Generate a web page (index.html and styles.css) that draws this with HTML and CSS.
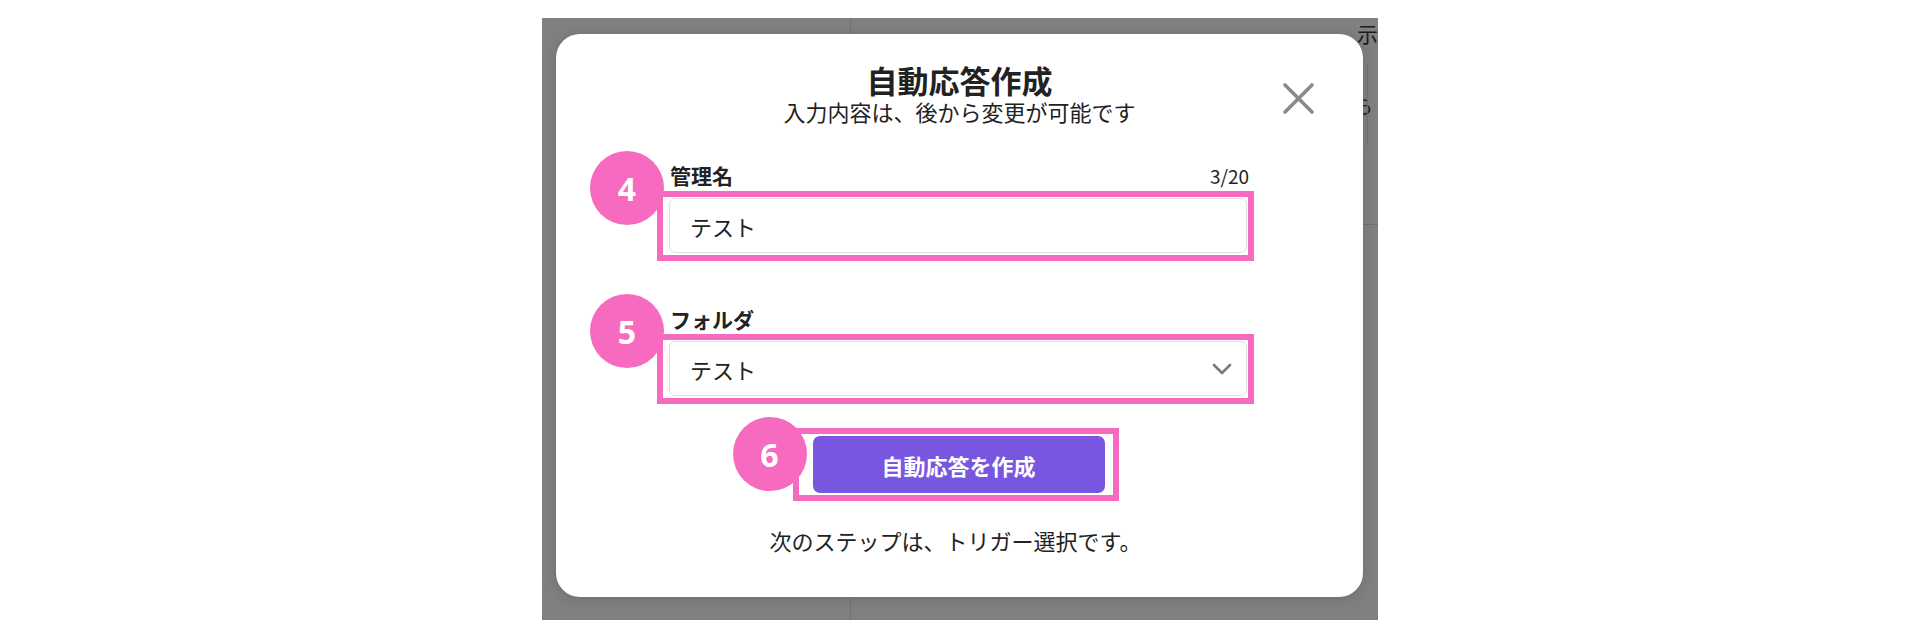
FILE: index.html
```html
<!DOCTYPE html>
<html lang="ja">
<head>
    <meta charset="UTF-8">
    <meta name="viewport" content="width=device-width, initial-scale=1.0">
    <title>自動応答作成</title>
    <link rel="stylesheet" href="styles.css">
</head>
<body>
    <div class="screen">
        <!-- dimmed page behind the dialog -->
        <div class="page">
            <div class="page-side"></div>
            <div class="page-main">
                <div class="page-head">示</div>
                <div class="page-row">
                    <span class="page-glyph">ら</span>
                    <div class="page-rail"></div>
                </div>
                <div class="page-block"></div>
            </div>
        </div>

        <div class="overlay">
            <div class="modal">
                <button class="close" aria-label="閉じる">
                    <svg width="33" height="33" viewBox="0 0 33 33">
                        <path d="M3 3 L30 30 M30 3 L3 30" stroke="#8a8a8a" stroke-width="3.6" stroke-linecap="round" fill="none"/>
                    </svg>
                </button>

                <div class="modal-head">
                    <h1>自動応答作成</h1>
                    <p>入力内容は、後から変更が可能です</p>
                </div>

                <div class="modal-body">
                    <div class="field">
                        <div class="field-label">
                            <span>管理名</span>
                            <span class="counter">3/20</span>
                        </div>
                        <div class="mark">
                            <span class="step step-field">4</span>
                            <input class="text-input" type="text" value="テスト">
                        </div>
                    </div>

                    <div class="field field-folder">
                        <div class="field-label">
                            <span>フォルダ</span>
                        </div>
                        <div class="mark">
                            <span class="step step-field">5</span>
                            <div class="select">
                                <span>テスト</span>
                                <svg width="20" height="12" viewBox="0 0 20 12">
                                    <path d="M2 2 L10 10 L18 2" stroke="#7a7a7a" stroke-width="2.6" stroke-linecap="round" stroke-linejoin="round" fill="none"/>
                                </svg>
                            </div>
                        </div>
                    </div>

                    <div class="submit-row">
                        <div class="mark mark-button">
                            <span class="step step-button">6</span>
                            <button class="submit">自動応答を作成</button>
                        </div>
                    </div>

                    <p class="next">次のステップは、トリガー選択です。</p>
                </div>
            </div>
        </div>
    </div>
</body>
</html>
```

FILE: styles.css
```css
body {
    margin: 0;
    background-color: #ffffff;
    font-family: "Noto Sans CJK JP", "Noto Sans", sans-serif;
    color: #222222;
}
.screen {
    position: relative;
    width: 836px;
    height: 602px;
    margin: 18px 0 0 542px;
    background-color: #808080;
    overflow: hidden;
}

/* page behind */
.page {
    display: grid;
    grid-template-columns: 309px 1fr;
    height: 100%;
}
.page-side {
    border-right: 1px solid #727272;
}
.page-main {
    display: flex;
    flex-direction: column;
}
.page-head {
    height: 47px;
    font-size: 21px;
    line-height: 30px;
    text-align: right;
    color: #1c1c1c;
    white-space: nowrap;
}
.page-row {
    display: flex;
    justify-content: flex-end;
    align-items: center;
    height: 80px;
}
.page-glyph {
    font-size: 19px;
    color: #1c1c1c;
    margin-right: -6px;
}
.page-rail {
    width: 10px;
    height: 80px;
    border-left: 1px solid #6f6f6f;
}
.page-block {
    height: 79px;
    border-bottom: 1px solid #707070;
}

/* dialog */
.overlay {
    position: absolute;
    top: 0;
    left: 0;
    right: 0;
    bottom: 0;
    display: flex;
    padding: 16px 15px 23px 14px;
}
.modal {
    position: relative;
    flex: 1;
    background-color: #ffffff;
    border-radius: 24px;
    padding: 28px 0 0;
    box-shadow: 0 2px 14px rgba(0, 0, 0, 0.15);
}
.close {
    position: absolute;
    top: 48px;
    right: 48px;
    padding: 0;
    border: none;
    background: none;
    line-height: 0;
    cursor: pointer;
}
.modal-head {
    text-align: center;
}
.modal-head h1 {
    margin: 0;
    font-size: 31px;
    line-height: 35px;
    font-weight: 700;
}
.modal-head p {
    margin: 0;
    font-size: 22px;
    line-height: 28px;
}
.modal-body {
    padding: 0 109px 0 101px;
}
.field {
    margin-top: 36px;
}
.field-folder {
    margin-top: 44px;
}
.field-label {
    display: flex;
    justify-content: space-between;
    align-items: baseline;
    padding: 0 5px 0 13px;
    font-size: 21px;
    line-height: 28px;
    font-weight: 700;
}
.counter {
    font-size: 19px;
    font-weight: 400;
}
.mark {
    position: relative;
    border: 6px solid #f66bc0;
    padding: 1px 1px 2px 6px;
    margin-top: 1px;
}
.step {
    position: absolute;
    width: 74px;
    height: 74px;
    border-radius: 50%;
    background-color: #f66bc0;
    color: #ffffff;
    font-family: "Noto Sans", sans-serif;
    font-weight: 700;
    font-size: 32px;
    display: flex;
    align-items: center;
    justify-content: center;
}
.step-field {
    left: -73px;
    top: -46px;
}
.step-button {
    left: -66px;
    top: -17px;
}
.text-input,
.select {
    display: flex;
    align-items: center;
    box-sizing: border-box;
    width: 100%;
    height: 55px;
    padding: 0 14px 0 20px;
    border: 1px solid #dedede;
    border-radius: 6px;
    font-family: inherit;
    font-size: 22px;
    color: #222222;
    background-color: #ffffff;
}
.select {
    justify-content: space-between;
}
.submit-row {
    display: flex;
    justify-content: center;
    margin-top: 24px;
}
.mark-button {
    margin-top: 0;
    padding: 2px 8px 2px 14px;
}
.submit {
    display: block;
    width: 292px;
    height: 57px;
    border: none;
    border-radius: 7px;
    background-color: #7856df;
    color: #ffffff;
    font-family: inherit;
    font-size: 22px;
    font-weight: 700;
}
.next {
    margin: 25px 0 0;
    font-size: 22px;
    line-height: 28px;
    text-align: center;
}
```
